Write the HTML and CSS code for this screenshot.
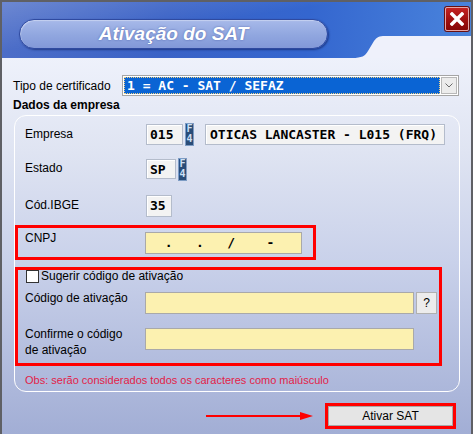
FILE: index.html
```html
<!DOCTYPE html>
<html lang="pt-BR">
<head>
    <meta charset="UTF-8">
    <title>Ativação do SAT</title>
    <link rel="stylesheet" href="styles.css">
</head>
<body>
    <div class="window">
        <div class="header">
            <div class="title-pill">Ativação do SAT</div>
            <div class="close-btn">
                <svg width="14" height="14" viewBox="0 0 14 14"><path d="M2 2 L12 12 M12 2 L2 12" stroke="#fff" stroke-width="3.4" stroke-linecap="square"/></svg>
            </div>
            <svg class="header-tab" width="119" height="22" viewBox="0 0 119 22"><path d="M0 22 C10 22 13 20 16 15 L22 5 C25 1 27 0 33 0 L119 0 L119 22 Z" fill="#eff1fb"/></svg>
        </div>

        <div class="content">
            <div class="cert-row">
                <span class="cert-label">Tipo de certificado</span>
                <div class="select">
                    <div class="select-value"><span>1 = AC - SAT / SEFAZ</span></div>
                    <div class="select-arrow">
                        <svg width="8" height="5" viewBox="0 0 8 5"><path d="M0.5 0.5 L4 4 L7.5 0.5" fill="none" stroke="#6a6a6a" stroke-width="1"/></svg>
                    </div>
                </div>
            </div>

            <div class="section-title">Dados da empresa</div>

            <div class="group">
                <div class="row row-empresa">
                    <span class="label">Empresa</span>
                    <div class="input w-code">015</div>
                    <div class="f4"><span>F</span><span>4</span></div>
                    <div class="input w-name">OTICAS LANCASTER - L015 (FRQ)</div>
                </div>
                <div class="row row-estado">
                    <span class="label">Estado</span>
                    <div class="input w-uf">SP</div>
                    <div class="f4"><span>F</span><span>4</span></div>
                </div>
                <div class="row row-ibge">
                    <span class="label">Cód.IBGE</span>
                    <div class="input w-ibge">35</div>
                </div>

                <div class="mark mark-cnpj">
                    <div class="mark-row">
                        <span class="mark-label">CNPJ</span>
                        <div class="input yellow w-cnpj">  .   .   /    -  </div>
                    </div>
                </div>

                <div class="mark mark-codigo">
                    <label class="check-row">
                        <span class="checkbox"></span>
                        <span>Sugerir código de ativação</span>
                    </label>
                    <div class="mark-row row-codigo">
                        <span class="mark-label">Código de ativação</span>
                        <div class="input yellow w-codigo"></div>
                        <div class="help-btn">?</div>
                    </div>
                    <div class="mark-row row-confirme">
                        <span class="mark-label two-line">Confirme o código<br>de ativação</span>
                        <div class="input yellow w-codigo"></div>
                    </div>
                </div>

                <div class="obs">Obs: serão considerados todos os caracteres como maiúsculo</div>
            </div>

            <div class="footer">
                <div class="arrow">
                    <span class="arrow-line"></span>
                    <span class="arrow-head"></span>
                </div>
                <div class="btn-mark">
                    <div class="button">Ativar SAT</div>
                </div>
            </div>
        </div>
    </div>
</body>
</html>
```

FILE: styles.css
```css
* {
    box-sizing: border-box;
    margin: 0;
    padding: 0;
}
body {
    font-family: "Liberation Sans", Arial, sans-serif;
    font-size: 12px;
    color: #000;
    background: #a3afd5;
    width: 473px;
    height: 434px;
    overflow: hidden;
}
.window {
    width: 473px;
    height: 434px;
    border: 2px solid #5f6065;
    border-bottom: none;
    background: linear-gradient(180deg, #eef1fb 56px, #dfe4f2 150px, #c9d1ea 260px, #a2aed5 100%);
}
.header {
    position: relative;
    height: 56px;
    background:
        linear-gradient(172deg, rgba(255,255,255,0.18) 0%, rgba(255,255,255,0) 40%),
        linear-gradient(95deg, #4d6ec8 0%, #3a62c6 35%, #3466cf 65%, #4a84dc 100%);
    display: flex;
    align-items: flex-start;
    justify-content: space-between;
    padding: 17px 2px 0 17px;
}
.title-pill {
    width: 309px;
    height: 30px;
    border-radius: 15px;
    background: linear-gradient(180deg, #a7b9e9 0%, #92a8e0 50%, #8298d8 100%);
    border: 1px solid #2f4aa0;
    box-shadow: 1px 1px 2px rgba(20, 40, 110, 0.7), inset 1px 1px 1px rgba(255,255,255,0.35);
    color: #fff;
    font-size: 19px;
    font-weight: bold;
    font-style: italic;
    text-align: center;
    line-height: 28px;
    text-shadow: 0 0 2px rgba(40, 60, 140, 0.6);
}
.close-btn {
    width: 24px;
    height: 24px;
    margin-top: -12px;
    border: 1px solid #e6a5a5;
    border-radius: 2px;
    background: linear-gradient(180deg, #c42222 0%, #a11010 50%, #860606 100%);
    box-shadow: 0 0 0 1px #6a1010;
    display: flex;
    align-items: center;
    justify-content: center;
}
.header-tab {
    position: absolute;
    right: 0;
    bottom: 0;
}
.content {
    padding: 17px 11px 0 11px;
}
.cert-row {
    display: flex;
    align-items: center;
    height: 21px;
}
.cert-label {
    width: 109px;
}
.select {
    width: 337px;
    height: 21px;
    border: 1px solid #a5a5a5;
    background: #fff;
    display: flex;
    padding: 1px;
}
.select-value {
    flex: 1;
    background: #0a64d4;
    border: 1px dotted #f0d080;
    color: #fff;
    font-family: "DejaVu Sans Mono", "Liberation Mono", monospace;
    font-weight: bold;
    font-size: 13px;
    line-height: 15px;
    padding-left: 2px;
    white-space: pre;
}
.select-arrow {
    width: 16px;
    margin-left: 1px;
    background: #ececec;
    border: 1px solid #b8b8b8;
    display: flex;
    align-items: center;
    justify-content: center;
}
.section-title {
    font-weight: bold;
    margin-top: 2px;
    height: 15px;
    line-height: 15px;
}
.group {
    margin-top: 2px;
    margin-left: 1px;
    width: 446px;
    height: 277px;
    border: 1px solid #fff;
    border-radius: 12px;
}
.row {
    display: flex;
    align-items: center;
    padding-left: 10px;
}
.label {
    width: 121px;
    margin-top: -2px;
}
.row-empresa {
    margin-top: 8px;
    height: 21px;
}
.row-estado {
    margin-top: 14px;
    height: 20px;
}
.row-ibge {
    margin-top: 16px;
    height: 22px;
}
.input {
    height: 100%;
    background: #f3f3f3;
    border: 1px solid #b4bccb;
    box-shadow: inset 1px 1px 0 #fff;
    font-family: "DejaVu Sans Mono", "Liberation Mono", monospace;
    font-weight: bold;
    font-size: 13px;
    line-height: 19px;
    padding-left: 3px;
    white-space: pre;
}
.w-code { width: 37px; }
.w-name { width: 240px; margin-left: 11px; padding-left: 4px; }
.w-uf { width: 30px; }
.w-ibge { width: 26px; }
.f4 {
    width: 9px;
    height: 23px;
    margin-left: 2px;
    background: #2a4c78;
    border: 1px solid #7d9cc4;
    display: flex;
    flex-direction: column;
    align-items: center;
    color: #cfe0f5;
    font-family: "DejaVu Sans Mono", monospace;
    font-weight: bold;
    font-size: 10px;
    line-height: 10px;
}
.mark {
    border: 3px solid #ff0000;
}
.mark-cnpj {
    margin-top: 8px;
    width: 301px;
    height: 35px;
    padding: 4px 0 0 7px;
}
.mark-row {
    display: flex;
    align-items: flex-start;
}
.mark-label {
    width: 120px;
    line-height: 15px;
}
.mark-cnpj .mark-label {
    margin-top: -1px;
}
.yellow {
    background: #fcf1b0;
    border: 1px solid #a9a9a9;
    box-shadow: none;
    height: 22px;
}
.w-cnpj {
    width: 157px;
}
.mark-codigo {
    margin-top: 7px;
    width: 427px;
    height: 99px;
    padding: 0 0 0 7px;
}
.check-row {
    display: flex;
    align-items: center;
    height: 13px;
    line-height: 13px;
    padding-left: 1px;
}
.checkbox {
    width: 13px;
    height: 13px;
    background: #fff;
    border: 1px solid #333;
    margin-right: 2px;
}
.row-codigo {
    margin-top: 9px;
}
.row-codigo .mark-label {
    margin-top: -1px;
}
.w-codigo {
    width: 269px;
}
.help-btn {
    width: 21px;
    height: 22px;
    margin-left: 2px;
    background: #ececec;
    border: 1px solid #b0b0b0;
    text-align: center;
    line-height: 20px;
    font-size: 12px;
}
.row-confirme {
    margin-top: 14px;
}
.two-line {
    line-height: 16px;
    margin-top: -2px;
}
.obs {
    padding-left: 10px;
    margin-top: 7px;
    font-size: 11px;
    line-height: 14px;
    color: #e21d48;
}
.footer {
    display: flex;
    justify-content: flex-end;
    align-items: center;
    margin-top: 11px;
    padding-right: 4px;
}
.arrow {
    display: flex;
    align-items: center;
    margin-right: 12px;
}
.arrow-line {
    width: 94px;
    height: 2px;
    background: #ff0000;
}
.arrow-head {
    width: 0;
    height: 0;
    border-top: 4px solid transparent;
    border-bottom: 4px solid transparent;
    border-left: 13px solid #ff0000;
}
.btn-mark {
    border: 3px solid #ff0000;
    width: 131px;
    height: 26px;
}
.button {
    height: 100%;
    background: #e5e5e5;
    border: 1px solid #a8a8a8;
    text-align: center;
    line-height: 18px;
    font-size: 12px;
}
```
